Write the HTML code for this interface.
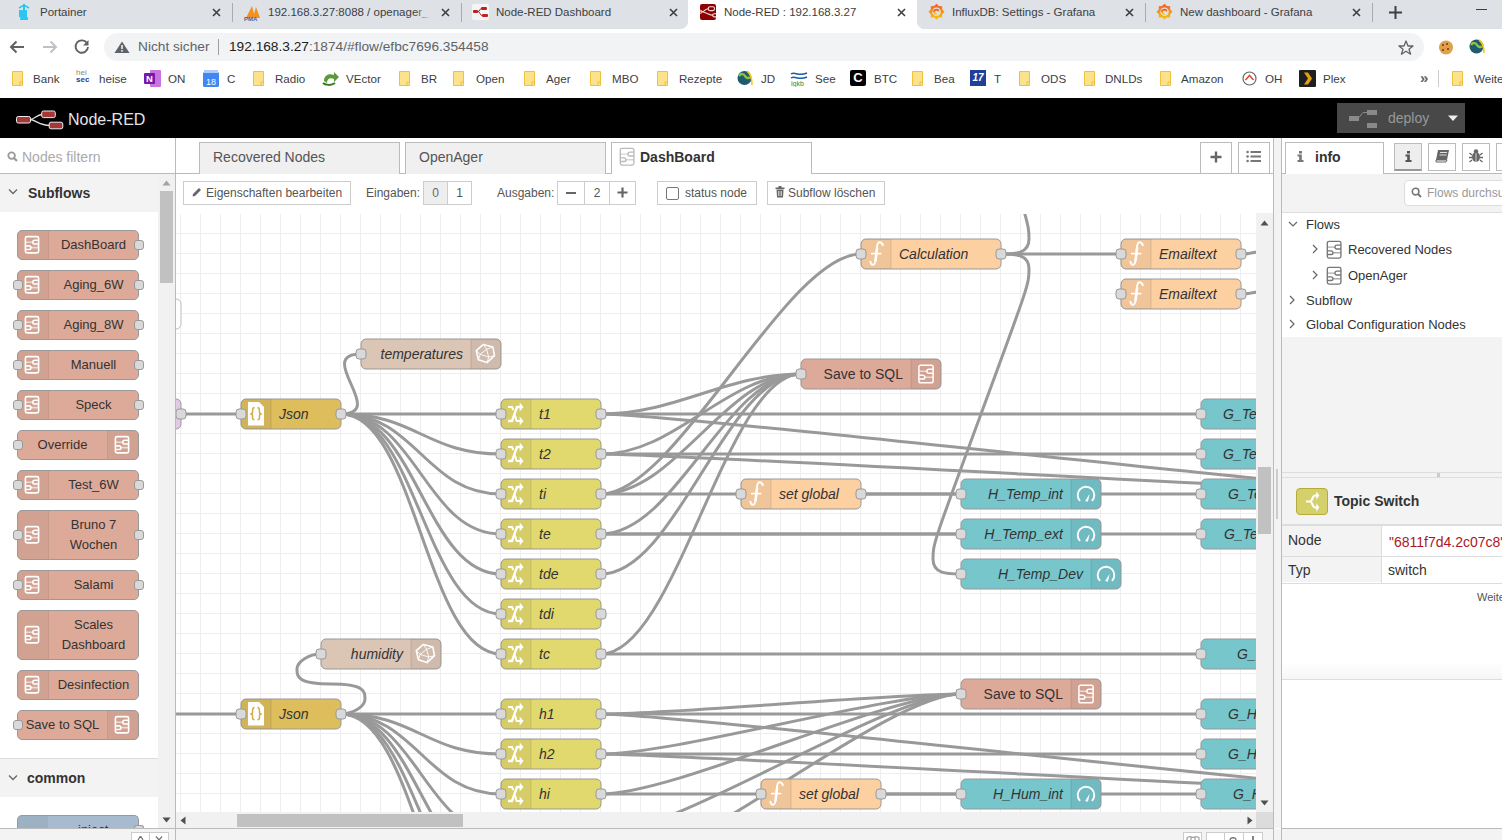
<!DOCTYPE html>
<html><head><meta charset="utf-8"><title>Node-RED</title><style>
*{box-sizing:border-box;margin:0;padding:0}
html,body{width:1502px;height:840px;overflow:hidden;background:#fff;font-family:"Liberation Sans",sans-serif;color:#333}
body{position:relative}
.a{position:absolute}
.tt{position:absolute;top:5px;font-size:11.5px;line-height:15px;color:#3c4043;white-space:nowrap}
.bm{position:absolute;top:71px;font-size:11.6px;line-height:15px;color:#3c4043;white-space:nowrap}
.pn{position:absolute;left:17px;width:122px;background:#DDAA99;border:1px solid #999;border-radius:5px;font-size:13px;color:#333}
.pn .ic{position:absolute;top:0;bottom:0;width:31px;background:rgba(0,0,0,0.05)}
.pn .lb{position:absolute;top:0;bottom:0;display:flex;align-items:center;justify-content:center;text-align:center;line-height:20px}
.pp{position:absolute;width:10px;height:10px;background:#d9d9d9;border:1px solid #999;border-radius:3px}
.wt{position:absolute;top:142px;height:32px;background:#f0f0f0;border:1px solid #bbb;border-bottom:none;font-size:14px;color:#555;line-height:29px;padding-left:13px;white-space:nowrap}
.wt.act{background:#fff;height:33px}
.bt{position:absolute;top:181px;height:24px;border:1px solid #ccc;background:#fff;font-size:12px;color:#555;line-height:22px;white-space:nowrap}
.tr{position:absolute;font-size:13px;line-height:17px;color:#333;white-space:nowrap}
</style></head><body>
<div class="a" style="left:0;top:0;width:1502px;height:29px;background:#DEE1E6"></div>
<div class="a" style="left:688px;top:0;width:229px;height:29px;background:#fff"></div>
<div class="a" style="left:680px;top:21px;width:8px;height:8px;background:radial-gradient(circle at 0 0,#DEE1E6 8px,#fff 8.5px)"></div>
<div class="a" style="left:917px;top:21px;width:8px;height:8px;background:radial-gradient(circle at 100% 0,#DEE1E6 8px,#fff 8.5px)"></div>
<div class="tt" style="left:40px;width:162px;overflow:hidden">Portainer</div>
<svg class="a" style="left:212px;top:8px" width="9" height="9"><path d="M1 1L8 8M8 1L1 8" stroke="#3c4043" stroke-width="1.6"/></svg>
<div class="tt" style="left:268px;width:163px;overflow:hidden">192.168.3.27:8088 / openager_</div>
<svg class="a" style="left:441px;top:8px" width="9" height="9"><path d="M1 1L8 8M8 1L1 8" stroke="#3c4043" stroke-width="1.6"/></svg>
<div class="tt" style="left:496px;width:163px;overflow:hidden">Node-RED Dashboard</div>
<svg class="a" style="left:669px;top:8px" width="9" height="9"><path d="M1 1L8 8M8 1L1 8" stroke="#3c4043" stroke-width="1.6"/></svg>
<div class="tt" style="left:724px;width:163px;overflow:hidden">Node-RED : 192.168.3.27</div>
<svg class="a" style="left:897px;top:8px" width="9" height="9"><path d="M1 1L8 8M8 1L1 8" stroke="#3c4043" stroke-width="1.6"/></svg>
<div class="tt" style="left:952px;width:163px;overflow:hidden">InfluxDB: Settings - Grafana</div>
<svg class="a" style="left:1125px;top:8px" width="9" height="9"><path d="M1 1L8 8M8 1L1 8" stroke="#3c4043" stroke-width="1.6"/></svg>
<div class="tt" style="left:1180px;width:162px;overflow:hidden">New dashboard - Grafana</div>
<svg class="a" style="left:1352px;top:8px" width="9" height="9"><path d="M1 1L8 8M8 1L1 8" stroke="#3c4043" stroke-width="1.6"/></svg>
<div class="a" style="left:232px;top:3px;width:1px;height:19px;background:#A8ABAF"></div>
<div class="a" style="left:461px;top:3px;width:1px;height:19px;background:#A8ABAF"></div>
<div class="a" style="left:1145px;top:3px;width:1px;height:19px;background:#A8ABAF"></div>
<div class="a" style="left:1372px;top:3px;width:1px;height:19px;background:#A8ABAF"></div>
<div class="a" style="left:415px;top:2px;width:16px;height:22px;background:linear-gradient(90deg,rgba(222,225,230,0),#DEE1E6)"></div>
<svg class="a" style="left:17px;top:4px" width="14" height="17"><path d="M7 0V14" stroke="#2ec5f0" stroke-width="2"/><path d="M2 4L7 1L12 4" fill="none" stroke="#2ec5f0" stroke-width="1.5"/><rect x="2" y="6" width="8" height="7" fill="#2ec5f0"/><rect x="3" y="13" width="8" height="3" rx="1" fill="#2ec5f0"/></svg>
<svg class="a" style="left:243px;top:4px" width="20" height="17"><path d="M3 14L9 2L11 10L13 3L17 14Z" fill="#F4901D"/><text x="1" y="17" font-size="6" font-weight="bold" fill="#5a5b8c" font-family="Liberation Sans">PMA</text></svg>
<svg class="a" style="left:472px;top:4px" width="17" height="16"><rect x="0" y="0" width="17" height="16" rx="2" fill="#f5f5f5"/><rect x="1" y="6" width="5" height="3" rx="1" fill="#b22"/><rect x="9" y="3" width="6" height="3" rx="1" fill="#b22"/><rect x="10" y="10" width="6" height="3" rx="1" fill="#b22"/><path d="M6 7.5C8 7.5 8 4.5 9 4.5M6 7.5C8 7.5 8 11.5 10 11.5" stroke="#b22" fill="none"/></svg>
<svg class="a" style="left:700px;top:4px" width="16" height="16"><rect width="16" height="16" rx="2" fill="#8F0000"/><rect x="8.2" y="2.8" width="6.4" height="3.8" rx="1.9" fill="none" stroke="#f3dcdc" stroke-width="1.1"/><path d="M0 7.8H2C4.5 7.8 5 4.7 8.2 4.7M2 7.8C5.5 7.8 9 11.3 13.3 11.3" fill="none" stroke="#f3dcdc" stroke-width="1.1"/><path d="M16 9.7H14.2A1.6 1.6 0 0 0 14.2 12.9H16" fill="none" stroke="#f3dcdc" stroke-width="1.1"/><path d="M0 6.3H0.6A1.5 1.5 0 0 1 0.6 9.3H0" fill="none" stroke="#f3dcdc" stroke-width="1"/></svg>
<svg class="a" style="left:928px;top:3px" width="18" height="18"><defs><linearGradient id="gg0" x1="0" y1="0" x2="0" y2="1"><stop offset="0" stop-color="#F05A28"/><stop offset="1" stop-color="#FBCA0A"/></linearGradient></defs><path d="M8.50 0.80 L10.87 3.07 L14.16 3.14 L14.23 6.43 L16.50 8.80 L14.23 11.17 L14.16 14.46 L10.87 14.53 L8.50 16.80 L6.13 14.53 L2.84 14.46 L2.77 11.17 L0.50 8.80 L2.77 6.43 L2.84 3.14 L6.13 3.07Z" fill="url(#gg0)"/><circle cx="8.5" cy="8.8" r="4.3" fill="#DEE1E6"/><path d="M8.8 11.2A2.3 2.3 0 1 1 10.8 8.4A3.2 3.2 0 0 0 5 8.8" fill="none" stroke="url(#gg0)" stroke-width="1.6"/></svg>
<svg class="a" style="left:1156px;top:3px" width="18" height="18"><defs><linearGradient id="gg1" x1="0" y1="0" x2="0" y2="1"><stop offset="0" stop-color="#F05A28"/><stop offset="1" stop-color="#FBCA0A"/></linearGradient></defs><path d="M8.50 0.80 L10.87 3.07 L14.16 3.14 L14.23 6.43 L16.50 8.80 L14.23 11.17 L14.16 14.46 L10.87 14.53 L8.50 16.80 L6.13 14.53 L2.84 14.46 L2.77 11.17 L0.50 8.80 L2.77 6.43 L2.84 3.14 L6.13 3.07Z" fill="url(#gg1)"/><circle cx="8.5" cy="8.8" r="4.3" fill="#DEE1E6"/><path d="M8.8 11.2A2.3 2.3 0 1 1 10.8 8.4A3.2 3.2 0 0 0 5 8.8" fill="none" stroke="url(#gg1)" stroke-width="1.6"/></svg>
<svg class="a" style="left:1389px;top:6px" width="13" height="13"><path d="M6.5 0V13M0 6.5H13" stroke="#3c4043" stroke-width="2"/></svg>
<div class="a" style="left:1476px;top:9px;width:11px;height:1px;background:#3c4043"></div>
<div class="a" style="left:104px;top:33px;width:1320px;height:28px;background:#F1F3F4;border-radius:14px"></div>
<svg class="a" style="left:8px;top:39px" width="18" height="16"><path d="M16 8H3M8.5 2.5L3 8L8.5 13.5" fill="none" stroke="#5f6368" stroke-width="2"/></svg>
<svg class="a" style="left:41px;top:39px" width="18" height="16"><path d="M2 8H15M9.5 2.5L15 8L9.5 13.5" fill="none" stroke="#bdc1c6" stroke-width="2"/></svg>
<svg class="a" style="left:73px;top:38px" width="18" height="18"><path d="M14.2 5.5A6.2 6.2 0 1 0 15 9" fill="none" stroke="#5f6368" stroke-width="1.9"/><path d="M15.5 2V7.5H10Z" fill="#5f6368"/></svg>
<svg class="a" style="left:114px;top:41px" width="16" height="12"><path d="M8 0.5L15.5 12H0.5Z" fill="#5f6368"/><rect x="7.2" y="4" width="1.6" height="4" fill="#F1F3F4"/><rect x="7.2" y="9" width="1.6" height="1.6" fill="#F1F3F4"/></svg>
<div class="a" style="left:138px;top:39px;font-size:13.7px;line-height:16px;color:#5f6368">Nicht sicher</div>
<div class="a" style="left:218px;top:39px;width:1px;height:16px;background:#9aa0a6"></div>
<div class="a" style="left:229px;top:39px;font-size:13.7px;line-height:16px;color:#5f6368;white-space:nowrap"><span style="color:#202124">192.168.3.27</span>:1874/#flow/efbc7696.354458</div>
<svg class="a" style="left:1398px;top:40px" width="16" height="15"><path d="M8 1L10 6H15L11 9.2L12.6 14.2L8 11.2L3.4 14.2L5 9.2L1 6H6Z" fill="none" stroke="#5f6368" stroke-width="1.3" stroke-linejoin="round"/></svg>
<svg class="a" style="left:1438px;top:40px" width="16" height="15"><circle cx="8" cy="7.5" r="7" fill="#E0A04A"/><circle cx="5" cy="5" r="1" fill="#6b3b12"/><circle cx="9" cy="4" r="1" fill="#6b3b12"/><circle cx="10" cy="9" r="1" fill="#6b3b12"/><circle cx="5" cy="10" r="1" fill="#6b3b12"/></svg>
<svg class="a" style="left:1469px;top:39px" width="18" height="16"><circle cx="7.5" cy="7.5" r="7" fill="#1f5a6e"/><path d="M2 6C4 3 7 4 8 6S12 9 13 7" stroke="#8bc34a" stroke-width="2.5" fill="none"/><path d="M10 1C14 4 15 10 15 14" stroke="#F9C80E" stroke-width="1.6" fill="none"/></svg>
<div class="bm" style="left:33px">Bank</div>
<div class="bm" style="left:99px">heise</div>
<div class="bm" style="left:168px">ON</div>
<div class="bm" style="left:227px">C</div>
<div class="bm" style="left:275px">Radio</div>
<div class="bm" style="left:346px">VEctor</div>
<div class="bm" style="left:421px">BR</div>
<div class="bm" style="left:476px">Open</div>
<div class="bm" style="left:546px">Ager</div>
<div class="bm" style="left:612px">MBO</div>
<div class="bm" style="left:679px">Rezepte</div>
<div class="bm" style="left:761px">JD</div>
<div class="bm" style="left:815px">See</div>
<div class="bm" style="left:874px">BTC</div>
<div class="bm" style="left:934px">Bea</div>
<div class="bm" style="left:994px">T</div>
<div class="bm" style="left:1041px">ODS</div>
<div class="bm" style="left:1105px">DNLDs</div>
<div class="bm" style="left:1181px">Amazon</div>
<div class="bm" style="left:1265px">OH</div>
<div class="bm" style="left:1323px">Plex</div>
<div class="bm" style="left:1474px">Weitere</div>
<svg class="a" style="left:12px;top:71px" width="12" height="16"><path d="M0.5 0.5H10.5V14.5H0.5Z" fill="#FCE28A" stroke="#EFC13F" stroke-width="1"/><path d="M8 14.5V11H10.5" fill="none" stroke="#EFC13F" stroke-width="1"/></svg>
<svg class="a" style="left:253px;top:71px" width="12" height="16"><path d="M0.5 0.5H10.5V14.5H0.5Z" fill="#FCE28A" stroke="#EFC13F" stroke-width="1"/><path d="M8 14.5V11H10.5" fill="none" stroke="#EFC13F" stroke-width="1"/></svg>
<svg class="a" style="left:399px;top:71px" width="12" height="16"><path d="M0.5 0.5H10.5V14.5H0.5Z" fill="#FCE28A" stroke="#EFC13F" stroke-width="1"/><path d="M8 14.5V11H10.5" fill="none" stroke="#EFC13F" stroke-width="1"/></svg>
<svg class="a" style="left:453px;top:71px" width="12" height="16"><path d="M0.5 0.5H10.5V14.5H0.5Z" fill="#FCE28A" stroke="#EFC13F" stroke-width="1"/><path d="M8 14.5V11H10.5" fill="none" stroke="#EFC13F" stroke-width="1"/></svg>
<svg class="a" style="left:524px;top:71px" width="12" height="16"><path d="M0.5 0.5H10.5V14.5H0.5Z" fill="#FCE28A" stroke="#EFC13F" stroke-width="1"/><path d="M8 14.5V11H10.5" fill="none" stroke="#EFC13F" stroke-width="1"/></svg>
<svg class="a" style="left:590px;top:71px" width="12" height="16"><path d="M0.5 0.5H10.5V14.5H0.5Z" fill="#FCE28A" stroke="#EFC13F" stroke-width="1"/><path d="M8 14.5V11H10.5" fill="none" stroke="#EFC13F" stroke-width="1"/></svg>
<svg class="a" style="left:657px;top:71px" width="12" height="16"><path d="M0.5 0.5H10.5V14.5H0.5Z" fill="#FCE28A" stroke="#EFC13F" stroke-width="1"/><path d="M8 14.5V11H10.5" fill="none" stroke="#EFC13F" stroke-width="1"/></svg>
<svg class="a" style="left:912px;top:71px" width="12" height="16"><path d="M0.5 0.5H10.5V14.5H0.5Z" fill="#FCE28A" stroke="#EFC13F" stroke-width="1"/><path d="M8 14.5V11H10.5" fill="none" stroke="#EFC13F" stroke-width="1"/></svg>
<svg class="a" style="left:1019px;top:71px" width="12" height="16"><path d="M0.5 0.5H10.5V14.5H0.5Z" fill="#FCE28A" stroke="#EFC13F" stroke-width="1"/><path d="M8 14.5V11H10.5" fill="none" stroke="#EFC13F" stroke-width="1"/></svg>
<svg class="a" style="left:1084px;top:71px" width="12" height="16"><path d="M0.5 0.5H10.5V14.5H0.5Z" fill="#FCE28A" stroke="#EFC13F" stroke-width="1"/><path d="M8 14.5V11H10.5" fill="none" stroke="#EFC13F" stroke-width="1"/></svg>
<svg class="a" style="left:1160px;top:71px" width="12" height="16"><path d="M0.5 0.5H10.5V14.5H0.5Z" fill="#FCE28A" stroke="#EFC13F" stroke-width="1"/><path d="M8 14.5V11H10.5" fill="none" stroke="#EFC13F" stroke-width="1"/></svg>
<svg class="a" style="left:1452px;top:71px" width="12" height="16"><path d="M0.5 0.5H10.5V14.5H0.5Z" fill="#FCE28A" stroke="#EFC13F" stroke-width="1"/><path d="M8 14.5V11H10.5" fill="none" stroke="#EFC13F" stroke-width="1"/></svg>
<div class="a" style="left:76px;top:69px;font-size:8px;line-height:7px;color:#888;font-family:'Liberation Sans'">hei<br><span style="color:#1a3da0;font-weight:bold">sec</span></div>
<svg class="a" style="left:144px;top:70px" width="17" height="17"><rect x="6" y="0" width="11" height="17" rx="1" fill="#C774DF"/><rect x="0" y="3" width="11" height="11" rx="1" fill="#7719AA"/><text x="5.5" y="12" text-anchor="middle" font-size="9.5" font-weight="bold" fill="#fff" font-family="Liberation Sans">N</text></svg>
<svg class="a" style="left:203px;top:70px" width="16" height="17"><rect x="0" y="2" width="16" height="15" rx="1.5" fill="#4285F4"/><rect x="1" y="0" width="14" height="3" fill="#aecbfa"/><text x="8" y="14.5" text-anchor="middle" font-size="9" fill="#fff" font-family="Liberation Sans">18</text></svg>
<svg class="a" style="left:322px;top:71px" width="17" height="15"><path d="M2 10C2 4 7 2 12 4L12 1L17 6L12 11L12 8C8 6 5 8 5 12Z" fill="#5B9A3C"/><path d="M1 12C3 14 9 15 13 12" stroke="#3b7a1c" stroke-width="2" fill="none"/></svg>
<svg class="a" style="left:737px;top:70px" width="18" height="17"><circle cx="7.5" cy="8" r="7" fill="#1f5a6e"/><path d="M2 6C4 3 7 4 8 6S12 9 13 7" stroke="#8bc34a" stroke-width="2.5" fill="none"/><path d="M10 1C14 4 15 10 15 15" stroke="#F9C80E" stroke-width="1.6" fill="none"/></svg>
<svg class="a" style="left:790px;top:70px" width="18" height="17"><path d="M1 4C5 1 8 7 17 3M1 8C5 5 8 11 17 7" stroke="#1a5ca8" stroke-width="1.5" fill="none"/><text x="1" y="16" font-size="7" fill="#2a8a3a" font-family="Liberation Sans">igkb</text></svg>
<div class="a" style="left:850px;top:70px;width:16px;height:16px;background:#000;border-radius:2px;color:#fff;font-size:13px;font-weight:bold;line-height:16px;text-align:center">C</div>
<div class="a" style="left:970px;top:70px;width:16px;height:16px;background:#1f3f9a;color:#fff;font-size:10px;font-weight:bold;line-height:16px;text-align:center;font-style:italic">17</div>
<svg class="a" style="left:1242px;top:71px" width="15" height="15"><circle cx="7.5" cy="7.5" r="6.5" fill="none" stroke="#666" stroke-width="1.2"/><path d="M3.5 9L7.5 4.5L11.5 9" fill="none" stroke="#E64A2E" stroke-width="1.6"/></svg>
<svg class="a" style="left:1299px;top:70px" width="17" height="17"><rect width="17" height="17" rx="1" fill="#1F1F1F"/><path d="M5 2.5H9L13 8.5L9 14.5H5L9 8.5Z" fill="#E5A00D"/></svg>
<div class="a" style="left:1420px;top:70px;font-size:15px;line-height:16px;font-weight:bold;color:#5f6368">&#187;</div>
<div class="a" style="left:1438px;top:70px;width:1px;height:17px;background:#ccc"></div>
<div class="a" style="left:0;top:98px;width:1502px;height:40px;background:#000"></div>
<svg class="a" style="left:14px;top:109px" width="52" height="22">
<path d="M16 10.5C20 10.5 23 5.5 28 5.5M16 10.5C21 10.5 25 16.5 36 16.5" stroke="#ddd" stroke-width="1.4" fill="none"/>
<rect x="2.5" y="7.5" width="14" height="6.5" rx="1.8" fill="#A53737" stroke="#eee" stroke-width="1"/>
<rect x="27.7" y="2" width="13.6" height="6.6" rx="1.8" fill="#A53737" stroke="#eee" stroke-width="1"/>
<rect x="35.2" y="13.2" width="13.6" height="6.6" rx="1.8" fill="#A53737" stroke="#eee" stroke-width="1"/>
</svg>
<div class="a" style="left:68px;top:110px;font-size:16px;line-height:19px;color:#e4e4e4">Node-RED</div>
<div class="a" style="left:1337px;top:103px;width:128px;height:30px;background:#484848"></div>
<svg class="a" style="left:1349px;top:109px" width="30" height="20"><rect x="0" y="7" width="10" height="5" fill="#8a8a8a"/><rect x="18" y="1" width="10" height="5" fill="#8a8a8a"/><rect x="18" y="14" width="10" height="5" fill="#8a8a8a"/><path d="M10 8.5L14 3.5H18" stroke="#8a8a8a" stroke-width="1" fill="none"/></svg>
<div class="a" style="left:1388px;top:110px;font-size:14px;line-height:17px;color:#999">deploy</div>
<svg class="a" style="left:1448px;top:115px" width="11" height="7"><path d="M0 0.5H10L5 6Z" fill="#eee"/></svg>
<div class="a" style="left:0;top:138px;width:175px;height:36px;background:#fff;border-bottom:1px solid #bbb"></div>
<svg class="a" style="left:7px;top:151px" width="11" height="11"><circle cx="4.6" cy="4.6" r="3.3" fill="none" stroke="#999" stroke-width="1.8"/><path d="M7 7L10 10" stroke="#999" stroke-width="2.2"/></svg>
<div class="a" style="left:22px;top:149px;font-size:14px;line-height:17px;color:#aaa">Nodes filtern</div>
<div class="a" style="left:0;top:174px;width:158px;height:38px;background:#f3f3f3"></div>
<div class="a" style="left:0;top:212px;width:158px;height:546px;background:#fff"></div>
<svg class="a" style="left:8px;top:188px" width="10" height="8"><path d="M1 1.5L5 5.5L9 1.5" fill="none" stroke="#666" stroke-width="1.3"/></svg>
<div class="a" style="left:28px;top:185px;font-size:14px;line-height:17px;color:#333;font-weight:bold">Subflows</div>
<div class="a" style="left:158px;top:174px;width:17px;height:654px;background:#f1f1f1"></div>
<div class="a" style="left:160px;top:191px;width:13px;height:92px;background:#c1c1c1"></div>
<svg class="a" style="left:162px;top:180px" width="9" height="6"><path d="M0.5 5.5H8.5L4.5 0.5Z" fill="#a3a3a3"/></svg>
<svg class="a" style="left:162px;top:817px" width="9" height="6"><path d="M0.5 0.5H8.5L4.5 5.5Z" fill="#505050"/></svg>
<div class="pn" style="top:230px;height:30px"><div class="ic" style="left:0;border-radius:4px 0 0 4px;border-right:1px solid rgba(0,0,0,0.05)"><svg width="18" height="20" style="position:absolute;left:6px;top:4px"><g transform="translate(1.4,1.6) scale(0.93)" fill="none" stroke="#fff" stroke-width="1.72043"><rect x="0" y="0" width="14.2" height="17.5" rx="1.8"/><path d="M14.2 4H10A2 2 0 0 0 10 8H14.2M0 10H4A1.9 1.9 0 0 1 4 13.8H0"/><path d="M0 6H8M6 11.9H14.2" stroke-opacity="0.6"/></g></svg></div><div class="lb" style="left:31px;right:0">DashBoard</div></div>
<div class="pp" style="left:134px;top:240px"></div>
<div class="pn" style="top:270px;height:30px"><div class="ic" style="left:0;border-radius:4px 0 0 4px;border-right:1px solid rgba(0,0,0,0.05)"><svg width="18" height="20" style="position:absolute;left:6px;top:4px"><g transform="translate(1.4,1.6) scale(0.93)" fill="none" stroke="#fff" stroke-width="1.72043"><rect x="0" y="0" width="14.2" height="17.5" rx="1.8"/><path d="M14.2 4H10A2 2 0 0 0 10 8H14.2M0 10H4A1.9 1.9 0 0 1 4 13.8H0"/><path d="M0 6H8M6 11.9H14.2" stroke-opacity="0.6"/></g></svg></div><div class="lb" style="left:31px;right:0">Aging_6W</div></div>
<div class="pp" style="left:13px;top:280px"></div>
<div class="pp" style="left:134px;top:280px"></div>
<div class="pn" style="top:310px;height:30px"><div class="ic" style="left:0;border-radius:4px 0 0 4px;border-right:1px solid rgba(0,0,0,0.05)"><svg width="18" height="20" style="position:absolute;left:6px;top:4px"><g transform="translate(1.4,1.6) scale(0.93)" fill="none" stroke="#fff" stroke-width="1.72043"><rect x="0" y="0" width="14.2" height="17.5" rx="1.8"/><path d="M14.2 4H10A2 2 0 0 0 10 8H14.2M0 10H4A1.9 1.9 0 0 1 4 13.8H0"/><path d="M0 6H8M6 11.9H14.2" stroke-opacity="0.6"/></g></svg></div><div class="lb" style="left:31px;right:0">Aging_8W</div></div>
<div class="pp" style="left:13px;top:320px"></div>
<div class="pp" style="left:134px;top:320px"></div>
<div class="pn" style="top:350px;height:30px"><div class="ic" style="left:0;border-radius:4px 0 0 4px;border-right:1px solid rgba(0,0,0,0.05)"><svg width="18" height="20" style="position:absolute;left:6px;top:4px"><g transform="translate(1.4,1.6) scale(0.93)" fill="none" stroke="#fff" stroke-width="1.72043"><rect x="0" y="0" width="14.2" height="17.5" rx="1.8"/><path d="M14.2 4H10A2 2 0 0 0 10 8H14.2M0 10H4A1.9 1.9 0 0 1 4 13.8H0"/><path d="M0 6H8M6 11.9H14.2" stroke-opacity="0.6"/></g></svg></div><div class="lb" style="left:31px;right:0">Manuell</div></div>
<div class="pp" style="left:13px;top:360px"></div>
<div class="pp" style="left:134px;top:360px"></div>
<div class="pn" style="top:390px;height:30px"><div class="ic" style="left:0;border-radius:4px 0 0 4px;border-right:1px solid rgba(0,0,0,0.05)"><svg width="18" height="20" style="position:absolute;left:6px;top:4px"><g transform="translate(1.4,1.6) scale(0.93)" fill="none" stroke="#fff" stroke-width="1.72043"><rect x="0" y="0" width="14.2" height="17.5" rx="1.8"/><path d="M14.2 4H10A2 2 0 0 0 10 8H14.2M0 10H4A1.9 1.9 0 0 1 4 13.8H0"/><path d="M0 6H8M6 11.9H14.2" stroke-opacity="0.6"/></g></svg></div><div class="lb" style="left:31px;right:0">Speck</div></div>
<div class="pp" style="left:13px;top:400px"></div>
<div class="pp" style="left:134px;top:400px"></div>
<div class="pn" style="top:430px;height:30px"><div class="ic" style="right:0;border-radius:0 4px 4px 0;border-left:1px solid rgba(0,0,0,0.05)"><svg width="18" height="20" style="position:absolute;left:6px;top:4px"><g transform="translate(1.4,1.6) scale(0.93)" fill="none" stroke="#fff" stroke-width="1.72043"><rect x="0" y="0" width="14.2" height="17.5" rx="1.8"/><path d="M14.2 4H10A2 2 0 0 0 10 8H14.2M0 10H4A1.9 1.9 0 0 1 4 13.8H0"/><path d="M0 6H8M6 11.9H14.2" stroke-opacity="0.6"/></g></svg></div><div class="lb" style="left:0;right:31px">Override</div></div>
<div class="pp" style="left:13px;top:440px"></div>
<div class="pn" style="top:470px;height:30px"><div class="ic" style="left:0;border-radius:4px 0 0 4px;border-right:1px solid rgba(0,0,0,0.05)"><svg width="18" height="20" style="position:absolute;left:6px;top:4px"><g transform="translate(1.4,1.6) scale(0.93)" fill="none" stroke="#fff" stroke-width="1.72043"><rect x="0" y="0" width="14.2" height="17.5" rx="1.8"/><path d="M14.2 4H10A2 2 0 0 0 10 8H14.2M0 10H4A1.9 1.9 0 0 1 4 13.8H0"/><path d="M0 6H8M6 11.9H14.2" stroke-opacity="0.6"/></g></svg></div><div class="lb" style="left:31px;right:0">Test_6W</div></div>
<div class="pp" style="left:13px;top:480px"></div>
<div class="pp" style="left:134px;top:480px"></div>
<div class="pn" style="top:510px;height:50px"><div class="ic" style="left:0;border-radius:4px 0 0 4px;border-right:1px solid rgba(0,0,0,0.05)"><svg width="18" height="20" style="position:absolute;left:6px;top:14px"><g transform="translate(1.4,1.6) scale(0.93)" fill="none" stroke="#fff" stroke-width="1.72043"><rect x="0" y="0" width="14.2" height="17.5" rx="1.8"/><path d="M14.2 4H10A2 2 0 0 0 10 8H14.2M0 10H4A1.9 1.9 0 0 1 4 13.8H0"/><path d="M0 6H8M6 11.9H14.2" stroke-opacity="0.6"/></g></svg></div><div class="lb" style="left:31px;right:0">Bruno 7<br>Wochen</div></div>
<div class="pp" style="left:13px;top:530px"></div>
<div class="pp" style="left:134px;top:530px"></div>
<div class="pn" style="top:570px;height:30px"><div class="ic" style="left:0;border-radius:4px 0 0 4px;border-right:1px solid rgba(0,0,0,0.05)"><svg width="18" height="20" style="position:absolute;left:6px;top:4px"><g transform="translate(1.4,1.6) scale(0.93)" fill="none" stroke="#fff" stroke-width="1.72043"><rect x="0" y="0" width="14.2" height="17.5" rx="1.8"/><path d="M14.2 4H10A2 2 0 0 0 10 8H14.2M0 10H4A1.9 1.9 0 0 1 4 13.8H0"/><path d="M0 6H8M6 11.9H14.2" stroke-opacity="0.6"/></g></svg></div><div class="lb" style="left:31px;right:0">Salami</div></div>
<div class="pp" style="left:13px;top:580px"></div>
<div class="pp" style="left:134px;top:580px"></div>
<div class="pn" style="top:610px;height:50px"><div class="ic" style="left:0;border-radius:4px 0 0 4px;border-right:1px solid rgba(0,0,0,0.05)"><svg width="18" height="20" style="position:absolute;left:6px;top:14px"><g transform="translate(1.4,1.6) scale(0.93)" fill="none" stroke="#fff" stroke-width="1.72043"><rect x="0" y="0" width="14.2" height="17.5" rx="1.8"/><path d="M14.2 4H10A2 2 0 0 0 10 8H14.2M0 10H4A1.9 1.9 0 0 1 4 13.8H0"/><path d="M0 6H8M6 11.9H14.2" stroke-opacity="0.6"/></g></svg></div><div class="lb" style="left:31px;right:0">Scales<br>Dashboard</div></div>
<div class="pn" style="top:670px;height:30px"><div class="ic" style="left:0;border-radius:4px 0 0 4px;border-right:1px solid rgba(0,0,0,0.05)"><svg width="18" height="20" style="position:absolute;left:6px;top:4px"><g transform="translate(1.4,1.6) scale(0.93)" fill="none" stroke="#fff" stroke-width="1.72043"><rect x="0" y="0" width="14.2" height="17.5" rx="1.8"/><path d="M14.2 4H10A2 2 0 0 0 10 8H14.2M0 10H4A1.9 1.9 0 0 1 4 13.8H0"/><path d="M0 6H8M6 11.9H14.2" stroke-opacity="0.6"/></g></svg></div><div class="lb" style="left:31px;right:0">Desinfection</div></div>
<div class="pn" style="top:710px;height:30px"><div class="ic" style="right:0;border-radius:0 4px 4px 0;border-left:1px solid rgba(0,0,0,0.05)"><svg width="18" height="20" style="position:absolute;left:6px;top:4px"><g transform="translate(1.4,1.6) scale(0.93)" fill="none" stroke="#fff" stroke-width="1.72043"><rect x="0" y="0" width="14.2" height="17.5" rx="1.8"/><path d="M14.2 4H10A2 2 0 0 0 10 8H14.2M0 10H4A1.9 1.9 0 0 1 4 13.8H0"/><path d="M0 6H8M6 11.9H14.2" stroke-opacity="0.6"/></g></svg></div><div class="lb" style="left:0;right:31px">Save to SQL</div></div>
<div class="pp" style="left:13px;top:720px"></div>
<div class="a" style="left:0;top:758px;width:158px;height:1px;background:#ddd"></div>
<div class="a" style="left:0;top:759px;width:158px;height:38px;background:#f3f3f3"></div>
<svg class="a" style="left:8px;top:774px" width="10" height="8"><path d="M1 1.5L5 5.5L9 1.5" fill="none" stroke="#666" stroke-width="1.3"/></svg>
<div class="a" style="left:27px;top:770px;font-size:14px;line-height:17px;color:#333;font-weight:bold">common</div>
<div class="a" style="left:17px;top:815px;width:122px;height:20px;background:#a6bbcf;border:1px solid #999;border-bottom:none;border-radius:5px 5px 0 0;overflow:hidden"><div style="position:absolute;left:0;top:0;width:30px;height:20px;background:rgba(0,0,0,0.05)"></div><div style="position:absolute;left:60px;top:6px;font-size:13px;color:#333">inject</div></div>
<div class="a" style="left:134px;top:825px;width:10px;height:4px;background:#d9d9d9;border:1px solid #999;border-bottom:none;border-radius:3px 3px 0 0"></div>
<div class="a" style="left:175px;top:138px;width:1px;height:690px;background:#bbb"></div>
<div class="a" style="left:176px;top:173px;width:1097px;height:1px;background:#bbb"></div>
<div class="wt" style="left:199px;width:201px">Recovered Nodes</div>
<div class="wt" style="left:405px;width:201px">OpenAger</div>
<div class="wt act" style="left:611px;width:201px;padding-left:28px;font-weight:bold;color:#333">DashBoard</div>
<svg class="a" style="left:619px;top:147px" width="18" height="20"><g transform="translate(1.3,1.3) scale(0.96)" fill="none" stroke="#bbb" stroke-width="1.40625"><rect x="0" y="0" width="14.2" height="17.5" rx="1.8"/><path d="M14.2 4H10A2 2 0 0 0 10 8H14.2M0 10H4A1.9 1.9 0 0 1 4 13.8H0"/><path d="M0 6H8M6 11.9H14.2" stroke-opacity="0.6"/></g></svg>
<div class="wt" style="left:1200px;width:32px;height:31px;background:#fff;padding:0"></div>
<div class="wt" style="left:1238px;width:32px;height:31px;background:#fff;padding:0"></div>
<svg class="a" style="left:1209px;top:150px" width="14" height="14"><path d="M7 1.5V12.5M1.5 7H12.5" stroke="#666" stroke-width="2.4"/></svg>
<svg class="a" style="left:1246px;top:150px" width="16" height="13"><circle cx="1.6" cy="2" r="1.3" fill="#777"/><circle cx="1.6" cy="6.5" r="1.3" fill="#777"/><circle cx="1.6" cy="11" r="1.3" fill="#777"/><path d="M4.5 2H15M4.5 6.5H15M4.5 11H15" stroke="#777" stroke-width="1.8"/></svg>
<div class="a" style="left:176px;top:174px;width:1097px;height:40px;background:#fff;border-bottom:1px solid #bbb"></div>
<div class="bt" style="left:183px;width:168px;padding-left:22px">Eigenschaften bearbeiten</div>
<svg class="a" style="left:191px;top:187px" width="11" height="11"><path d="M1.5 9.5L2 7L8 1L10 3L4 9Z" fill="#666"/></svg>
<div class="a" style="left:366px;top:186px;font-size:12px;line-height:14px;color:#555">Eingaben:</div>
<div class="bt" style="left:423px;width:25px;background:#eee;text-align:center;color:#666">0</div>
<div class="bt" style="left:447px;width:25px;text-align:center">1</div>
<div class="a" style="left:497px;top:186px;font-size:12px;line-height:14px;color:#555">Ausgaben:</div>
<div class="bt" style="left:557px;width:28px"></div>
<div class="a" style="left:566px;top:192px;width:10px;height:2px;background:#666"></div>
<div class="bt" style="left:584px;width:26px;text-align:center">2</div>
<div class="bt" style="left:609px;width:27px"></div>
<svg class="a" style="left:617px;top:187px" width="11" height="11"><path d="M5.5 0.5V10.5M0.5 5.5H10.5" stroke="#666" stroke-width="2.2"/></svg>
<div class="bt" style="left:657px;width:100px;padding-left:27px">status node</div>
<div class="a" style="left:666px;top:187px;width:13px;height:13px;border:1px solid #777;border-radius:2px;background:#fff"></div>
<div class="bt" style="left:767px;width:118px;padding-left:20px">Subflow l&#246;schen</div>
<svg class="a" style="left:775px;top:186px" width="10" height="12"><rect x="0.5" y="1.5" width="9" height="1.5" fill="#666"/><rect x="3.5" y="0" width="3" height="2" fill="#666"/><path d="M1.5 3.5H8.5L8 11.5H2Z" fill="#666"/><path d="M3.5 5V10M5 5V10M6.5 5V10" stroke="#fff" stroke-width="0.6"/></svg>
<div class="a" style="left:176px;top:213px;width:1080px;height:599px;background:#fff"></div>
<svg width="1080" height="598" viewBox="176 214 1080 598" style="position:absolute;left:176px;top:214px" font-family='"Liberation Sans", sans-serif' font-size="14" fill="#333">
<path d="M180.5 214V812M200.5 214V812M220.5 214V812M240.5 214V812M260.5 214V812M280.5 214V812M300.5 214V812M320.5 214V812M340.5 214V812M360.5 214V812M380.5 214V812M400.5 214V812M420.5 214V812M440.5 214V812M460.5 214V812M480.5 214V812M500.5 214V812M520.5 214V812M540.5 214V812M560.5 214V812M580.5 214V812M600.5 214V812M620.5 214V812M640.5 214V812M660.5 214V812M680.5 214V812M700.5 214V812M720.5 214V812M740.5 214V812M760.5 214V812M780.5 214V812M800.5 214V812M820.5 214V812M840.5 214V812M860.5 214V812M880.5 214V812M900.5 214V812M920.5 214V812M940.5 214V812M960.5 214V812M980.5 214V812M1000.5 214V812M1020.5 214V812M1040.5 214V812M1060.5 214V812M1080.5 214V812M1100.5 214V812M1120.5 214V812M1140.5 214V812M1160.5 214V812M1180.5 214V812M1200.5 214V812M1220.5 214V812M1240.5 214V812M176 233.5H1256M176 253.5H1256M176 273.5H1256M176 293.5H1256M176 313.5H1256M176 333.5H1256M176 353.5H1256M176 373.5H1256M176 393.5H1256M176 413.5H1256M176 433.5H1256M176 453.5H1256M176 473.5H1256M176 493.5H1256M176 513.5H1256M176 533.5H1256M176 553.5H1256M176 573.5H1256M176 593.5H1256M176 613.5H1256M176 633.5H1256M176 653.5H1256M176 673.5H1256M176 693.5H1256M176 713.5H1256M176 733.5H1256M176 753.5H1256M176 773.5H1256M176 793.5H1256" stroke="#eee" stroke-width="1" fill="none"/>
<path d="M 181 414 C 226 414 196 414 241 414" stroke="#999" stroke-width="3" fill="none"/>
<path d="M 341 414 C 388.434 414 313.566 354 361 354" stroke="#999" stroke-width="3" fill="none"/>
<path d="M 341 414 C 416 414 426 414 501 414" stroke="#999" stroke-width="3" fill="none"/>
<path d="M 341 414 C 416 414 426 454 501 454" stroke="#999" stroke-width="3" fill="none"/>
<path d="M 341 414 C 416 414 426 494 501 494" stroke="#999" stroke-width="3" fill="none"/>
<path d="M 341 414 C 416 414 426 534 501 534" stroke="#999" stroke-width="3" fill="none"/>
<path d="M 341 414 C 416 414 426 574 501 574" stroke="#999" stroke-width="3" fill="none"/>
<path d="M 341 414 C 416 414 426 614 501 614" stroke="#999" stroke-width="3" fill="none"/>
<path d="M 341 414 C 416 414 426 654 501 654" stroke="#999" stroke-width="3" fill="none"/>
<path d="M 601 414 C 676 414 726 374 801 374" stroke="#999" stroke-width="3" fill="none"/>
<path d="M 601 454 C 676 454 726 374 801 374" stroke="#999" stroke-width="3" fill="none"/>
<path d="M 601 494 C 676 494 726 374 801 374" stroke="#999" stroke-width="3" fill="none"/>
<path d="M 601 534 C 676 534 726 374 801 374" stroke="#999" stroke-width="3" fill="none"/>
<path d="M 601 574 C 676 574 726 374 801 374" stroke="#999" stroke-width="3" fill="none"/>
<path d="M 601 654 C 676 654 726 374 801 374" stroke="#999" stroke-width="3" fill="none"/>
<path d="M 601 414 C 676 414 1126 414 1201 414" stroke="#999" stroke-width="3" fill="none"/>
<path d="M 601 454 C 676 454 1126 454 1201 454" stroke="#999" stroke-width="3" fill="none"/>
<path d="M 601 414 C 676 414 1366 494 1441 494" stroke="#999" stroke-width="3" fill="none"/>
<path d="M 601 454 C 676 454 1366 494 1441 494" stroke="#999" stroke-width="3" fill="none"/>
<path d="M 601 494 C 676 494 786 254 861 254" stroke="#999" stroke-width="3" fill="none"/>
<path d="M 601 494 C 676 494 666 494 741 494" stroke="#999" stroke-width="3" fill="none"/>
<path d="M 601 534 C 676 534 886 534 961 534" stroke="#999" stroke-width="3" fill="none"/>
<path d="M 601 534 C 676 534 1126 534 1201 534" stroke="#999" stroke-width="3" fill="none"/>
<path d="M 601 654 C 676 654 1126 654 1201 654" stroke="#999" stroke-width="3" fill="none"/>
<path d="M 861 494 C 936 494 886 494 961 494" stroke="#999" stroke-width="3" fill="none"/>
<path d="M 861 494 C 936 494 1126 494 1201 494" stroke="#999" stroke-width="3" fill="none"/>
<path d="M 1001 254 C 1076 254 1046 254 1121 254" stroke="#999" stroke-width="3" fill="none"/>
<path d="M 1001 254 C 1015 254 1029 254 1029 269 S 1029 284 981 414 S 933 544 933 559 S 947 574 961 574" stroke="#999" stroke-width="3" fill="none"/>
<path d="M 1001 254 C 1015 254 1029 254 1029 239 S 1029 224 981 77 S 933 -70 933 -85 S 947 -100 961 -100" stroke="#999" stroke-width="3" fill="none"/>
<path d="M 1241 254 C 1316 254 1366 120 1441 120" stroke="#999" stroke-width="3" fill="none"/>
<path d="M 1241 294 C 1316 294 1366 160 1441 160" stroke="#999" stroke-width="3" fill="none"/>
<path d="M 100 714 C 175 714 166 714 241 714" stroke="#999" stroke-width="3" fill="none"/>
<path d="M 341 714 C 353 714 365 706.5 365 699 S 365 684 331 684 S 297 676.5 297 669 S 309 654 321 654" stroke="#999" stroke-width="3" fill="none"/>
<path d="M 341 714 C 416 714 426 714 501 714" stroke="#999" stroke-width="3" fill="none"/>
<path d="M 341 714 C 416 714 426 754 501 754" stroke="#999" stroke-width="3" fill="none"/>
<path d="M 341 714 C 416 714 426 794 501 794" stroke="#999" stroke-width="3" fill="none"/>
<path d="M 341 714 C 416 714 426 834 501 834" stroke="#999" stroke-width="3" fill="none"/>
<path d="M 341 714 C 416 714 426 874 501 874" stroke="#999" stroke-width="3" fill="none"/>
<path d="M 341 714 C 416 714 426 914 501 914" stroke="#999" stroke-width="3" fill="none"/>
<path d="M 341 714 C 416 714 426 954 501 954" stroke="#999" stroke-width="3" fill="none"/>
<path d="M 601 714 C 676 714 886 694 961 694" stroke="#999" stroke-width="3" fill="none"/>
<path d="M 601 754 C 676 754 886 694 961 694" stroke="#999" stroke-width="3" fill="none"/>
<path d="M 601 794 C 676 794 886 694 961 694" stroke="#999" stroke-width="3" fill="none"/>
<path d="M 601 834 C 676 834 886 694 961 694" stroke="#999" stroke-width="3" fill="none"/>
<path d="M 601 874 C 676 874 886 694 961 694" stroke="#999" stroke-width="3" fill="none"/>
<path d="M 601 714 C 676 714 1126 714 1201 714" stroke="#999" stroke-width="3" fill="none"/>
<path d="M 601 754 C 676 754 1126 754 1201 754" stroke="#999" stroke-width="3" fill="none"/>
<path d="M 601 714 C 676 714 1366 794 1441 794" stroke="#999" stroke-width="3" fill="none"/>
<path d="M 601 754 C 676 754 1366 794 1441 794" stroke="#999" stroke-width="3" fill="none"/>
<path d="M 601 794 C 676 794 686 794 761 794" stroke="#999" stroke-width="3" fill="none"/>
<path d="M 881 794 C 941 794 901 794 961 794" stroke="#999" stroke-width="3" fill="none"/>
<path d="M 881 794 C 956 794 1126 794 1201 794" stroke="#999" stroke-width="3" fill="none"/>
<rect x="81" y="399" width="100" height="30" rx="5" fill="#E2C9E4" stroke="#999"/><rect x="176" y="409" width="10" height="10" rx="3" fill="#d9d9d9" stroke="#999"/>
<rect x="81" y="299" width="100" height="30" rx="5" fill="#ffffff" stroke="#bbb"/>
<rect x="241" y="399" width="100" height="30" rx="5" fill="#DEBD5C" stroke="#999"/><path d="M246 399 h25 v30 h-25 a5 5 0 0 1 -5 -5 v-20 a5 5 0 0 1 5 -5z" fill="#000" fill-opacity="0.05"/><path d="M271 399.5 V428.5" stroke="#000" stroke-opacity="0.1"/><g transform="translate(256,414)"><path d="M-8 -12 H3 L8 -7 V11.6 H-8 Z" fill="#fff"/><path d="M-1.5 -6.5 C-3.5 -6.5 -3.5 -5 -3.5 -3 V-1.5 C-3.5 -0.5 -4.5 0 -5.8 0 C-4.5 0 -3.5 0.5 -3.5 1.5 V3.5 C-3.5 5.5 -3 5.8 -1.5 5.8 M1.5 -6.5 C3.5 -6.5 3.5 -5 3.5 -3 V-1.5 C3.5 -0.5 4.5 0 5.8 0 C4.5 0 3.5 0.5 3.5 1.5 V3.5 C3.5 5.5 3 5.8 1.5 5.8" fill="none" stroke="#D2AE4A" stroke-width="1.5"/></g><text x="279" y="419" style="font-style:italic;">Json</text><rect x="236" y="409" width="10" height="10" rx="3" fill="#d9d9d9" stroke="#999"/><rect x="336" y="409" width="10" height="10" rx="3" fill="#d9d9d9" stroke="#999"/>
<rect x="361" y="339" width="140" height="30" rx="5" fill="#DBC5B5" stroke="#999"/><path d="M471 339 h25 a5 5 0 0 1 5 5 v20 a5 5 0 0 1 -5 5 h-25z" fill="#000" fill-opacity="0.05"/><path d="M471 339.5 V368.5" stroke="#000" stroke-opacity="0.1"/><g transform="translate(486,354)" fill="none" stroke="#fff" stroke-linejoin="round"><path d="M-2.6 -9.6 L6.8 -7.1 L8.5 1.7 L1 8.6 L-7.6 5.8 L-9.7 -3.4 Z" stroke-width="1.6"/><path d="M-2.6 -9.6 L0.6 -4.7 L6.8 -7.1 M0.6 -4.7 L-5.9 0.4 L-9.7 -3.4 M-5.9 0.4 L2.7 3 L0.6 -4.7 M2.7 3 L8.5 1.7 M2.7 3 L1 8.6 M-5.9 0.4 L-7.6 5.8" stroke-width="0.9"/></g><text x="463" y="359" text-anchor="end" style="font-style:italic;">temperatures</text><rect x="356" y="349" width="10" height="10" rx="3" fill="#d9d9d9" stroke="#999"/>
<rect x="861" y="239" width="140" height="30" rx="5" fill="#FDD0A2" stroke="#999"/><path d="M866 239 h25 v30 h-25 a5 5 0 0 1 -5 -5 v-20 a5 5 0 0 1 5 -5z" fill="#000" fill-opacity="0.05"/><path d="M891 239.5 V268.5" stroke="#000" stroke-opacity="0.1"/><g transform="translate(876,254)" fill="none" stroke="#fff" stroke-width="1.9" stroke-linecap="round"><path d="M6.9 -8.8 C6 -11.5 4.5 -11.8 3.4 -11.8 C1.5 -11.8 1 -9 0.9 -5 L-0.4 6 C-0.8 9.5 -1.5 10.8 -3 10.8 C-4.5 10.8 -5.3 9.5 -5.6 7.7"/><path d="M1.1 -6 L-0.5 6.5" stroke-width="2.5"/><path d="M-5 -0.4 H5.4" stroke-linecap="butt" stroke-width="1.6"/></g><text x="899" y="259" style="font-style:italic;">Calculation</text><rect x="856" y="249" width="10" height="10" rx="3" fill="#d9d9d9" stroke="#999"/><rect x="996" y="249" width="10" height="10" rx="3" fill="#d9d9d9" stroke="#999"/>
<rect x="1121" y="239" width="120" height="30" rx="5" fill="#FDD0A2" stroke="#999"/><path d="M1126 239 h25 v30 h-25 a5 5 0 0 1 -5 -5 v-20 a5 5 0 0 1 5 -5z" fill="#000" fill-opacity="0.05"/><path d="M1151 239.5 V268.5" stroke="#000" stroke-opacity="0.1"/><g transform="translate(1136,254)" fill="none" stroke="#fff" stroke-width="1.9" stroke-linecap="round"><path d="M6.9 -8.8 C6 -11.5 4.5 -11.8 3.4 -11.8 C1.5 -11.8 1 -9 0.9 -5 L-0.4 6 C-0.8 9.5 -1.5 10.8 -3 10.8 C-4.5 10.8 -5.3 9.5 -5.6 7.7"/><path d="M1.1 -6 L-0.5 6.5" stroke-width="2.5"/><path d="M-5 -0.4 H5.4" stroke-linecap="butt" stroke-width="1.6"/></g><text x="1159" y="259" style="font-style:italic;">Emailtext</text><rect x="1116" y="249" width="10" height="10" rx="3" fill="#d9d9d9" stroke="#999"/><rect x="1236" y="249" width="10" height="10" rx="3" fill="#d9d9d9" stroke="#999"/>
<rect x="1121" y="279" width="120" height="30" rx="5" fill="#FDD0A2" stroke="#999"/><path d="M1126 279 h25 v30 h-25 a5 5 0 0 1 -5 -5 v-20 a5 5 0 0 1 5 -5z" fill="#000" fill-opacity="0.05"/><path d="M1151 279.5 V308.5" stroke="#000" stroke-opacity="0.1"/><g transform="translate(1136,294)" fill="none" stroke="#fff" stroke-width="1.9" stroke-linecap="round"><path d="M6.9 -8.8 C6 -11.5 4.5 -11.8 3.4 -11.8 C1.5 -11.8 1 -9 0.9 -5 L-0.4 6 C-0.8 9.5 -1.5 10.8 -3 10.8 C-4.5 10.8 -5.3 9.5 -5.6 7.7"/><path d="M1.1 -6 L-0.5 6.5" stroke-width="2.5"/><path d="M-5 -0.4 H5.4" stroke-linecap="butt" stroke-width="1.6"/></g><text x="1159" y="299" style="font-style:italic;">Emailtext</text><rect x="1116" y="289" width="10" height="10" rx="3" fill="#d9d9d9" stroke="#999"/><rect x="1236" y="289" width="10" height="10" rx="3" fill="#d9d9d9" stroke="#999"/>
<rect x="801" y="359" width="140" height="30" rx="5" fill="#DDAA99" stroke="#999"/><path d="M911 359 h25 a5 5 0 0 1 5 5 v20 a5 5 0 0 1 -5 5 h-25z" fill="#000" fill-opacity="0.05"/><path d="M911 359.5 V388.5" stroke="#000" stroke-opacity="0.1"/><g transform="translate(918.9,365.25) scale(1)" fill="none" stroke="#fff" stroke-width="1.5"><rect x="0" y="0" width="14.2" height="17.5" rx="1.8"/><path d="M14.2 4H10A2 2 0 0 0 10 8H14.2M0 10H4A1.9 1.9 0 0 1 4 13.8H0"/><path d="M0 6H8M6 11.9H14.2" stroke-opacity="0.6"/></g><text x="903" y="379" text-anchor="end" style="">Save to SQL</text><rect x="796" y="369" width="10" height="10" rx="3" fill="#d9d9d9" stroke="#999"/>
<rect x="741" y="479" width="120" height="30" rx="5" fill="#FDD0A2" stroke="#999"/><path d="M746 479 h25 v30 h-25 a5 5 0 0 1 -5 -5 v-20 a5 5 0 0 1 5 -5z" fill="#000" fill-opacity="0.05"/><path d="M771 479.5 V508.5" stroke="#000" stroke-opacity="0.1"/><g transform="translate(756,494)" fill="none" stroke="#fff" stroke-width="1.9" stroke-linecap="round"><path d="M6.9 -8.8 C6 -11.5 4.5 -11.8 3.4 -11.8 C1.5 -11.8 1 -9 0.9 -5 L-0.4 6 C-0.8 9.5 -1.5 10.8 -3 10.8 C-4.5 10.8 -5.3 9.5 -5.6 7.7"/><path d="M1.1 -6 L-0.5 6.5" stroke-width="2.5"/><path d="M-5 -0.4 H5.4" stroke-linecap="butt" stroke-width="1.6"/></g><text x="779" y="499" style="font-style:italic;">set global</text><rect x="736" y="489" width="10" height="10" rx="3" fill="#d9d9d9" stroke="#999"/><rect x="856" y="489" width="10" height="10" rx="3" fill="#d9d9d9" stroke="#999"/>
<rect x="961" y="479" width="140" height="30" rx="5" fill="#77C6CC" stroke="#999"/><path d="M1071 479 h25 a5 5 0 0 1 5 5 v20 a5 5 0 0 1 -5 5 h-25z" fill="#000" fill-opacity="0.05"/><path d="M1071 479.5 V508.5" stroke="#000" stroke-opacity="0.1"/><g transform="translate(1086,494)"><path d="M-5.9 6.9 A8.3 8.3 0 1 1 5.9 6.9" fill="none" stroke="#fff" stroke-width="1.9"/><path d="M-0.9 7 L1.9 7.7 L3.7 -0.2 Z" fill="#fff"/></g><text x="1063" y="499" text-anchor="end" style="font-style:italic;">H_Temp_int</text><rect x="956" y="489" width="10" height="10" rx="3" fill="#d9d9d9" stroke="#999"/>
<rect x="961" y="519" width="140" height="30" rx="5" fill="#77C6CC" stroke="#999"/><path d="M1071 519 h25 a5 5 0 0 1 5 5 v20 a5 5 0 0 1 -5 5 h-25z" fill="#000" fill-opacity="0.05"/><path d="M1071 519.5 V548.5" stroke="#000" stroke-opacity="0.1"/><g transform="translate(1086,534)"><path d="M-5.9 6.9 A8.3 8.3 0 1 1 5.9 6.9" fill="none" stroke="#fff" stroke-width="1.9"/><path d="M-0.9 7 L1.9 7.7 L3.7 -0.2 Z" fill="#fff"/></g><text x="1063" y="539" text-anchor="end" style="font-style:italic;">H_Temp_ext</text><rect x="956" y="529" width="10" height="10" rx="3" fill="#d9d9d9" stroke="#999"/>
<rect x="961" y="559" width="160" height="30" rx="5" fill="#77C6CC" stroke="#999"/><path d="M1091 559 h25 a5 5 0 0 1 5 5 v20 a5 5 0 0 1 -5 5 h-25z" fill="#000" fill-opacity="0.05"/><path d="M1091 559.5 V588.5" stroke="#000" stroke-opacity="0.1"/><g transform="translate(1106,574)"><path d="M-5.9 6.9 A8.3 8.3 0 1 1 5.9 6.9" fill="none" stroke="#fff" stroke-width="1.9"/><path d="M-0.9 7 L1.9 7.7 L3.7 -0.2 Z" fill="#fff"/></g><text x="1083" y="579" text-anchor="end" style="font-style:italic;">H_Temp_Dev</text><rect x="956" y="569" width="10" height="10" rx="3" fill="#d9d9d9" stroke="#999"/>
<rect x="1201" y="399" width="180" height="30" rx="5" fill="#77C6CC" stroke="#999"/><path d="M1351 399 h25 a5 5 0 0 1 5 5 v20 a5 5 0 0 1 -5 5 h-25z" fill="#000" fill-opacity="0.05"/><path d="M1351 399.5 V428.5" stroke="#000" stroke-opacity="0.1"/><text x="1223" y="419" style="font-style:italic;">G_Temp_xx</text><rect x="1196" y="409" width="10" height="10" rx="3" fill="#d9d9d9" stroke="#999"/>
<rect x="1201" y="439" width="180" height="30" rx="5" fill="#77C6CC" stroke="#999"/><path d="M1351 439 h25 a5 5 0 0 1 5 5 v20 a5 5 0 0 1 -5 5 h-25z" fill="#000" fill-opacity="0.05"/><path d="M1351 439.5 V468.5" stroke="#000" stroke-opacity="0.1"/><text x="1223" y="459" style="font-style:italic;">G_Temp_xx</text><rect x="1196" y="449" width="10" height="10" rx="3" fill="#d9d9d9" stroke="#999"/>
<rect x="1201" y="479" width="180" height="30" rx="5" fill="#77C6CC" stroke="#999"/><path d="M1351 479 h25 a5 5 0 0 1 5 5 v20 a5 5 0 0 1 -5 5 h-25z" fill="#000" fill-opacity="0.05"/><path d="M1351 479.5 V508.5" stroke="#000" stroke-opacity="0.1"/><text x="1228" y="499" style="font-style:italic;">G_Temp_xx</text><rect x="1196" y="489" width="10" height="10" rx="3" fill="#d9d9d9" stroke="#999"/>
<rect x="1201" y="519" width="180" height="30" rx="5" fill="#77C6CC" stroke="#999"/><path d="M1351 519 h25 a5 5 0 0 1 5 5 v20 a5 5 0 0 1 -5 5 h-25z" fill="#000" fill-opacity="0.05"/><path d="M1351 519.5 V548.5" stroke="#000" stroke-opacity="0.1"/><text x="1224" y="539" style="font-style:italic;">G_Temp_xx</text><rect x="1196" y="529" width="10" height="10" rx="3" fill="#d9d9d9" stroke="#999"/>
<rect x="1201" y="639" width="180" height="30" rx="5" fill="#77C6CC" stroke="#999"/><path d="M1351 639 h25 a5 5 0 0 1 5 5 v20 a5 5 0 0 1 -5 5 h-25z" fill="#000" fill-opacity="0.05"/><path d="M1351 639.5 V668.5" stroke="#000" stroke-opacity="0.1"/><text x="1237" y="659" style="font-style:italic;">G_Temp_xx</text><rect x="1196" y="649" width="10" height="10" rx="3" fill="#d9d9d9" stroke="#999"/>
<rect x="321" y="639" width="120" height="30" rx="5" fill="#DBC5B5" stroke="#999"/><path d="M411 639 h25 a5 5 0 0 1 5 5 v20 a5 5 0 0 1 -5 5 h-25z" fill="#000" fill-opacity="0.05"/><path d="M411 639.5 V668.5" stroke="#000" stroke-opacity="0.1"/><g transform="translate(426,654)" fill="none" stroke="#fff" stroke-linejoin="round"><path d="M-2.6 -9.6 L6.8 -7.1 L8.5 1.7 L1 8.6 L-7.6 5.8 L-9.7 -3.4 Z" stroke-width="1.6"/><path d="M-2.6 -9.6 L0.6 -4.7 L6.8 -7.1 M0.6 -4.7 L-5.9 0.4 L-9.7 -3.4 M-5.9 0.4 L2.7 3 L0.6 -4.7 M2.7 3 L8.5 1.7 M2.7 3 L1 8.6 M-5.9 0.4 L-7.6 5.8" stroke-width="0.9"/></g><text x="403" y="659" text-anchor="end" style="font-style:italic;">humidity</text><rect x="316" y="649" width="10" height="10" rx="3" fill="#d9d9d9" stroke="#999"/>
<rect x="241" y="699" width="100" height="30" rx="5" fill="#DEBD5C" stroke="#999"/><path d="M246 699 h25 v30 h-25 a5 5 0 0 1 -5 -5 v-20 a5 5 0 0 1 5 -5z" fill="#000" fill-opacity="0.05"/><path d="M271 699.5 V728.5" stroke="#000" stroke-opacity="0.1"/><g transform="translate(256,714)"><path d="M-8 -12 H3 L8 -7 V11.6 H-8 Z" fill="#fff"/><path d="M-1.5 -6.5 C-3.5 -6.5 -3.5 -5 -3.5 -3 V-1.5 C-3.5 -0.5 -4.5 0 -5.8 0 C-4.5 0 -3.5 0.5 -3.5 1.5 V3.5 C-3.5 5.5 -3 5.8 -1.5 5.8 M1.5 -6.5 C3.5 -6.5 3.5 -5 3.5 -3 V-1.5 C3.5 -0.5 4.5 0 5.8 0 C4.5 0 3.5 0.5 3.5 1.5 V3.5 C3.5 5.5 3 5.8 1.5 5.8" fill="none" stroke="#D2AE4A" stroke-width="1.5"/></g><text x="279" y="719" style="font-style:italic;">Json</text><rect x="236" y="709" width="10" height="10" rx="3" fill="#d9d9d9" stroke="#999"/><rect x="336" y="709" width="10" height="10" rx="3" fill="#d9d9d9" stroke="#999"/>
<rect x="961" y="679" width="140" height="30" rx="5" fill="#DDAA99" stroke="#999"/><path d="M1071 679 h25 a5 5 0 0 1 5 5 v20 a5 5 0 0 1 -5 5 h-25z" fill="#000" fill-opacity="0.05"/><path d="M1071 679.5 V708.5" stroke="#000" stroke-opacity="0.1"/><g transform="translate(1078.9,685.25) scale(1)" fill="none" stroke="#fff" stroke-width="1.5"><rect x="0" y="0" width="14.2" height="17.5" rx="1.8"/><path d="M14.2 4H10A2 2 0 0 0 10 8H14.2M0 10H4A1.9 1.9 0 0 1 4 13.8H0"/><path d="M0 6H8M6 11.9H14.2" stroke-opacity="0.6"/></g><text x="1063" y="699" text-anchor="end" style="">Save to SQL</text><rect x="956" y="689" width="10" height="10" rx="3" fill="#d9d9d9" stroke="#999"/>
<rect x="761" y="779" width="120" height="30" rx="5" fill="#FDD0A2" stroke="#999"/><path d="M766 779 h25 v30 h-25 a5 5 0 0 1 -5 -5 v-20 a5 5 0 0 1 5 -5z" fill="#000" fill-opacity="0.05"/><path d="M791 779.5 V808.5" stroke="#000" stroke-opacity="0.1"/><g transform="translate(776,794)" fill="none" stroke="#fff" stroke-width="1.9" stroke-linecap="round"><path d="M6.9 -8.8 C6 -11.5 4.5 -11.8 3.4 -11.8 C1.5 -11.8 1 -9 0.9 -5 L-0.4 6 C-0.8 9.5 -1.5 10.8 -3 10.8 C-4.5 10.8 -5.3 9.5 -5.6 7.7"/><path d="M1.1 -6 L-0.5 6.5" stroke-width="2.5"/><path d="M-5 -0.4 H5.4" stroke-linecap="butt" stroke-width="1.6"/></g><text x="799" y="799" style="font-style:italic;">set global</text><rect x="756" y="789" width="10" height="10" rx="3" fill="#d9d9d9" stroke="#999"/><rect x="876" y="789" width="10" height="10" rx="3" fill="#d9d9d9" stroke="#999"/>
<rect x="961" y="779" width="140" height="30" rx="5" fill="#77C6CC" stroke="#999"/><path d="M1071 779 h25 a5 5 0 0 1 5 5 v20 a5 5 0 0 1 -5 5 h-25z" fill="#000" fill-opacity="0.05"/><path d="M1071 779.5 V808.5" stroke="#000" stroke-opacity="0.1"/><g transform="translate(1086,794)"><path d="M-5.9 6.9 A8.3 8.3 0 1 1 5.9 6.9" fill="none" stroke="#fff" stroke-width="1.9"/><path d="M-0.9 7 L1.9 7.7 L3.7 -0.2 Z" fill="#fff"/></g><text x="1063" y="799" text-anchor="end" style="font-style:italic;">H_Hum_int</text><rect x="956" y="789" width="10" height="10" rx="3" fill="#d9d9d9" stroke="#999"/>
<rect x="1201" y="699" width="180" height="30" rx="5" fill="#77C6CC" stroke="#999"/><path d="M1351 699 h25 a5 5 0 0 1 5 5 v20 a5 5 0 0 1 -5 5 h-25z" fill="#000" fill-opacity="0.05"/><path d="M1351 699.5 V728.5" stroke="#000" stroke-opacity="0.1"/><text x="1228" y="719" style="font-style:italic;">G_Hum_xx</text><rect x="1196" y="709" width="10" height="10" rx="3" fill="#d9d9d9" stroke="#999"/>
<rect x="1201" y="739" width="180" height="30" rx="5" fill="#77C6CC" stroke="#999"/><path d="M1351 739 h25 a5 5 0 0 1 5 5 v20 a5 5 0 0 1 -5 5 h-25z" fill="#000" fill-opacity="0.05"/><path d="M1351 739.5 V768.5" stroke="#000" stroke-opacity="0.1"/><text x="1228" y="759" style="font-style:italic;">G_Hum_xx</text><rect x="1196" y="749" width="10" height="10" rx="3" fill="#d9d9d9" stroke="#999"/>
<rect x="1201" y="779" width="180" height="30" rx="5" fill="#77C6CC" stroke="#999"/><path d="M1351 779 h25 a5 5 0 0 1 5 5 v20 a5 5 0 0 1 -5 5 h-25z" fill="#000" fill-opacity="0.05"/><path d="M1351 779.5 V808.5" stroke="#000" stroke-opacity="0.1"/><text x="1233" y="799" style="font-style:italic;">G_Hum_xx</text><rect x="1196" y="789" width="10" height="10" rx="3" fill="#d9d9d9" stroke="#999"/>
<rect x="501" y="399" width="100" height="30" rx="5" fill="#E2D96E" stroke="#999"/><path d="M506 399 h25 v30 h-25 a5 5 0 0 1 -5 -5 v-20 a5 5 0 0 1 5 -5z" fill="#000" fill-opacity="0.05"/><path d="M531 399.5 V428.5" stroke="#000" stroke-opacity="0.1"/><g transform="translate(515.5,414)" fill="none" stroke="#fff" stroke-width="2"><path d="M-7.5 7 H-3.5 L1.5 -7 H4.5" stroke-width="2.3"/><path d="M-7.5 -7 H-3.5 L-2.2 -3.8 M-0.5 1.5 L1 6.8 L1.5 7 H4.5"/><path d="M4.2 -11.5 L8 -7 L4.2 -2.5 Z M4.2 2.5 L8 7 L4.2 11.5 Z" fill="#fff" stroke="none"/></g><text x="539" y="419" style="font-style:italic;">t1</text><rect x="496" y="409" width="10" height="10" rx="3" fill="#d9d9d9" stroke="#999"/><rect x="596" y="409" width="10" height="10" rx="3" fill="#d9d9d9" stroke="#999"/>
<rect x="501" y="439" width="100" height="30" rx="5" fill="#E2D96E" stroke="#999"/><path d="M506 439 h25 v30 h-25 a5 5 0 0 1 -5 -5 v-20 a5 5 0 0 1 5 -5z" fill="#000" fill-opacity="0.05"/><path d="M531 439.5 V468.5" stroke="#000" stroke-opacity="0.1"/><g transform="translate(515.5,454)" fill="none" stroke="#fff" stroke-width="2"><path d="M-7.5 7 H-3.5 L1.5 -7 H4.5" stroke-width="2.3"/><path d="M-7.5 -7 H-3.5 L-2.2 -3.8 M-0.5 1.5 L1 6.8 L1.5 7 H4.5"/><path d="M4.2 -11.5 L8 -7 L4.2 -2.5 Z M4.2 2.5 L8 7 L4.2 11.5 Z" fill="#fff" stroke="none"/></g><text x="539" y="459" style="font-style:italic;">t2</text><rect x="496" y="449" width="10" height="10" rx="3" fill="#d9d9d9" stroke="#999"/><rect x="596" y="449" width="10" height="10" rx="3" fill="#d9d9d9" stroke="#999"/>
<rect x="501" y="479" width="100" height="30" rx="5" fill="#E2D96E" stroke="#999"/><path d="M506 479 h25 v30 h-25 a5 5 0 0 1 -5 -5 v-20 a5 5 0 0 1 5 -5z" fill="#000" fill-opacity="0.05"/><path d="M531 479.5 V508.5" stroke="#000" stroke-opacity="0.1"/><g transform="translate(515.5,494)" fill="none" stroke="#fff" stroke-width="2"><path d="M-7.5 7 H-3.5 L1.5 -7 H4.5" stroke-width="2.3"/><path d="M-7.5 -7 H-3.5 L-2.2 -3.8 M-0.5 1.5 L1 6.8 L1.5 7 H4.5"/><path d="M4.2 -11.5 L8 -7 L4.2 -2.5 Z M4.2 2.5 L8 7 L4.2 11.5 Z" fill="#fff" stroke="none"/></g><text x="539" y="499" style="font-style:italic;">ti</text><rect x="496" y="489" width="10" height="10" rx="3" fill="#d9d9d9" stroke="#999"/><rect x="596" y="489" width="10" height="10" rx="3" fill="#d9d9d9" stroke="#999"/>
<rect x="501" y="519" width="100" height="30" rx="5" fill="#E2D96E" stroke="#999"/><path d="M506 519 h25 v30 h-25 a5 5 0 0 1 -5 -5 v-20 a5 5 0 0 1 5 -5z" fill="#000" fill-opacity="0.05"/><path d="M531 519.5 V548.5" stroke="#000" stroke-opacity="0.1"/><g transform="translate(515.5,534)" fill="none" stroke="#fff" stroke-width="2"><path d="M-7.5 7 H-3.5 L1.5 -7 H4.5" stroke-width="2.3"/><path d="M-7.5 -7 H-3.5 L-2.2 -3.8 M-0.5 1.5 L1 6.8 L1.5 7 H4.5"/><path d="M4.2 -11.5 L8 -7 L4.2 -2.5 Z M4.2 2.5 L8 7 L4.2 11.5 Z" fill="#fff" stroke="none"/></g><text x="539" y="539" style="font-style:italic;">te</text><rect x="496" y="529" width="10" height="10" rx="3" fill="#d9d9d9" stroke="#999"/><rect x="596" y="529" width="10" height="10" rx="3" fill="#d9d9d9" stroke="#999"/>
<rect x="501" y="559" width="100" height="30" rx="5" fill="#E2D96E" stroke="#999"/><path d="M506 559 h25 v30 h-25 a5 5 0 0 1 -5 -5 v-20 a5 5 0 0 1 5 -5z" fill="#000" fill-opacity="0.05"/><path d="M531 559.5 V588.5" stroke="#000" stroke-opacity="0.1"/><g transform="translate(515.5,574)" fill="none" stroke="#fff" stroke-width="2"><path d="M-7.5 7 H-3.5 L1.5 -7 H4.5" stroke-width="2.3"/><path d="M-7.5 -7 H-3.5 L-2.2 -3.8 M-0.5 1.5 L1 6.8 L1.5 7 H4.5"/><path d="M4.2 -11.5 L8 -7 L4.2 -2.5 Z M4.2 2.5 L8 7 L4.2 11.5 Z" fill="#fff" stroke="none"/></g><text x="539" y="579" style="font-style:italic;">tde</text><rect x="496" y="569" width="10" height="10" rx="3" fill="#d9d9d9" stroke="#999"/><rect x="596" y="569" width="10" height="10" rx="3" fill="#d9d9d9" stroke="#999"/>
<rect x="501" y="599" width="100" height="30" rx="5" fill="#E2D96E" stroke="#999"/><path d="M506 599 h25 v30 h-25 a5 5 0 0 1 -5 -5 v-20 a5 5 0 0 1 5 -5z" fill="#000" fill-opacity="0.05"/><path d="M531 599.5 V628.5" stroke="#000" stroke-opacity="0.1"/><g transform="translate(515.5,614)" fill="none" stroke="#fff" stroke-width="2"><path d="M-7.5 7 H-3.5 L1.5 -7 H4.5" stroke-width="2.3"/><path d="M-7.5 -7 H-3.5 L-2.2 -3.8 M-0.5 1.5 L1 6.8 L1.5 7 H4.5"/><path d="M4.2 -11.5 L8 -7 L4.2 -2.5 Z M4.2 2.5 L8 7 L4.2 11.5 Z" fill="#fff" stroke="none"/></g><text x="539" y="619" style="font-style:italic;">tdi</text><rect x="496" y="609" width="10" height="10" rx="3" fill="#d9d9d9" stroke="#999"/><rect x="596" y="609" width="10" height="10" rx="3" fill="#d9d9d9" stroke="#999"/>
<rect x="501" y="639" width="100" height="30" rx="5" fill="#E2D96E" stroke="#999"/><path d="M506 639 h25 v30 h-25 a5 5 0 0 1 -5 -5 v-20 a5 5 0 0 1 5 -5z" fill="#000" fill-opacity="0.05"/><path d="M531 639.5 V668.5" stroke="#000" stroke-opacity="0.1"/><g transform="translate(515.5,654)" fill="none" stroke="#fff" stroke-width="2"><path d="M-7.5 7 H-3.5 L1.5 -7 H4.5" stroke-width="2.3"/><path d="M-7.5 -7 H-3.5 L-2.2 -3.8 M-0.5 1.5 L1 6.8 L1.5 7 H4.5"/><path d="M4.2 -11.5 L8 -7 L4.2 -2.5 Z M4.2 2.5 L8 7 L4.2 11.5 Z" fill="#fff" stroke="none"/></g><text x="539" y="659" style="font-style:italic;">tc</text><rect x="496" y="649" width="10" height="10" rx="3" fill="#d9d9d9" stroke="#999"/><rect x="596" y="649" width="10" height="10" rx="3" fill="#d9d9d9" stroke="#999"/>
<rect x="501" y="699" width="100" height="30" rx="5" fill="#E2D96E" stroke="#999"/><path d="M506 699 h25 v30 h-25 a5 5 0 0 1 -5 -5 v-20 a5 5 0 0 1 5 -5z" fill="#000" fill-opacity="0.05"/><path d="M531 699.5 V728.5" stroke="#000" stroke-opacity="0.1"/><g transform="translate(515.5,714)" fill="none" stroke="#fff" stroke-width="2"><path d="M-7.5 7 H-3.5 L1.5 -7 H4.5" stroke-width="2.3"/><path d="M-7.5 -7 H-3.5 L-2.2 -3.8 M-0.5 1.5 L1 6.8 L1.5 7 H4.5"/><path d="M4.2 -11.5 L8 -7 L4.2 -2.5 Z M4.2 2.5 L8 7 L4.2 11.5 Z" fill="#fff" stroke="none"/></g><text x="539" y="719" style="font-style:italic;">h1</text><rect x="496" y="709" width="10" height="10" rx="3" fill="#d9d9d9" stroke="#999"/><rect x="596" y="709" width="10" height="10" rx="3" fill="#d9d9d9" stroke="#999"/>
<rect x="501" y="739" width="100" height="30" rx="5" fill="#E2D96E" stroke="#999"/><path d="M506 739 h25 v30 h-25 a5 5 0 0 1 -5 -5 v-20 a5 5 0 0 1 5 -5z" fill="#000" fill-opacity="0.05"/><path d="M531 739.5 V768.5" stroke="#000" stroke-opacity="0.1"/><g transform="translate(515.5,754)" fill="none" stroke="#fff" stroke-width="2"><path d="M-7.5 7 H-3.5 L1.5 -7 H4.5" stroke-width="2.3"/><path d="M-7.5 -7 H-3.5 L-2.2 -3.8 M-0.5 1.5 L1 6.8 L1.5 7 H4.5"/><path d="M4.2 -11.5 L8 -7 L4.2 -2.5 Z M4.2 2.5 L8 7 L4.2 11.5 Z" fill="#fff" stroke="none"/></g><text x="539" y="759" style="font-style:italic;">h2</text><rect x="496" y="749" width="10" height="10" rx="3" fill="#d9d9d9" stroke="#999"/><rect x="596" y="749" width="10" height="10" rx="3" fill="#d9d9d9" stroke="#999"/>
<rect x="501" y="779" width="100" height="30" rx="5" fill="#E2D96E" stroke="#999"/><path d="M506 779 h25 v30 h-25 a5 5 0 0 1 -5 -5 v-20 a5 5 0 0 1 5 -5z" fill="#000" fill-opacity="0.05"/><path d="M531 779.5 V808.5" stroke="#000" stroke-opacity="0.1"/><g transform="translate(515.5,794)" fill="none" stroke="#fff" stroke-width="2"><path d="M-7.5 7 H-3.5 L1.5 -7 H4.5" stroke-width="2.3"/><path d="M-7.5 -7 H-3.5 L-2.2 -3.8 M-0.5 1.5 L1 6.8 L1.5 7 H4.5"/><path d="M4.2 -11.5 L8 -7 L4.2 -2.5 Z M4.2 2.5 L8 7 L4.2 11.5 Z" fill="#fff" stroke="none"/></g><text x="539" y="799" style="font-style:italic;">hi</text><rect x="496" y="789" width="10" height="10" rx="3" fill="#d9d9d9" stroke="#999"/><rect x="596" y="789" width="10" height="10" rx="3" fill="#d9d9d9" stroke="#999"/>
<rect x="501" y="819" width="100" height="30" rx="5" fill="#E2D96E" stroke="#999"/><path d="M506 819 h25 v30 h-25 a5 5 0 0 1 -5 -5 v-20 a5 5 0 0 1 5 -5z" fill="#000" fill-opacity="0.05"/><path d="M531 819.5 V848.5" stroke="#000" stroke-opacity="0.1"/><g transform="translate(515.5,834)" fill="none" stroke="#fff" stroke-width="2"><path d="M-7.5 7 H-3.5 L1.5 -7 H4.5" stroke-width="2.3"/><path d="M-7.5 -7 H-3.5 L-2.2 -3.8 M-0.5 1.5 L1 6.8 L1.5 7 H4.5"/><path d="M4.2 -11.5 L8 -7 L4.2 -2.5 Z M4.2 2.5 L8 7 L4.2 11.5 Z" fill="#fff" stroke="none"/></g><text x="539" y="839" style="font-style:italic;">he</text><rect x="496" y="829" width="10" height="10" rx="3" fill="#d9d9d9" stroke="#999"/><rect x="596" y="829" width="10" height="10" rx="3" fill="#d9d9d9" stroke="#999"/>
<rect x="501" y="859" width="100" height="30" rx="5" fill="#E2D96E" stroke="#999"/><path d="M506 859 h25 v30 h-25 a5 5 0 0 1 -5 -5 v-20 a5 5 0 0 1 5 -5z" fill="#000" fill-opacity="0.05"/><path d="M531 859.5 V888.5" stroke="#000" stroke-opacity="0.1"/><g transform="translate(515.5,874)" fill="none" stroke="#fff" stroke-width="2"><path d="M-7.5 7 H-3.5 L1.5 -7 H4.5" stroke-width="2.3"/><path d="M-7.5 -7 H-3.5 L-2.2 -3.8 M-0.5 1.5 L1 6.8 L1.5 7 H4.5"/><path d="M4.2 -11.5 L8 -7 L4.2 -2.5 Z M4.2 2.5 L8 7 L4.2 11.5 Z" fill="#fff" stroke="none"/></g><text x="539" y="879" style="font-style:italic;">hde</text><rect x="496" y="869" width="10" height="10" rx="3" fill="#d9d9d9" stroke="#999"/><rect x="596" y="869" width="10" height="10" rx="3" fill="#d9d9d9" stroke="#999"/>
<rect x="501" y="899" width="100" height="30" rx="5" fill="#E2D96E" stroke="#999"/><path d="M506 899 h25 v30 h-25 a5 5 0 0 1 -5 -5 v-20 a5 5 0 0 1 5 -5z" fill="#000" fill-opacity="0.05"/><path d="M531 899.5 V928.5" stroke="#000" stroke-opacity="0.1"/><g transform="translate(515.5,914)" fill="none" stroke="#fff" stroke-width="2"><path d="M-7.5 7 H-3.5 L1.5 -7 H4.5" stroke-width="2.3"/><path d="M-7.5 -7 H-3.5 L-2.2 -3.8 M-0.5 1.5 L1 6.8 L1.5 7 H4.5"/><path d="M4.2 -11.5 L8 -7 L4.2 -2.5 Z M4.2 2.5 L8 7 L4.2 11.5 Z" fill="#fff" stroke="none"/></g><text x="539" y="919" style="font-style:italic;">hdi</text><rect x="496" y="909" width="10" height="10" rx="3" fill="#d9d9d9" stroke="#999"/><rect x="596" y="909" width="10" height="10" rx="3" fill="#d9d9d9" stroke="#999"/>
<rect x="501" y="939" width="100" height="30" rx="5" fill="#E2D96E" stroke="#999"/><path d="M506 939 h25 v30 h-25 a5 5 0 0 1 -5 -5 v-20 a5 5 0 0 1 5 -5z" fill="#000" fill-opacity="0.05"/><path d="M531 939.5 V968.5" stroke="#000" stroke-opacity="0.1"/><g transform="translate(515.5,954)" fill="none" stroke="#fff" stroke-width="2"><path d="M-7.5 7 H-3.5 L1.5 -7 H4.5" stroke-width="2.3"/><path d="M-7.5 -7 H-3.5 L-2.2 -3.8 M-0.5 1.5 L1 6.8 L1.5 7 H4.5"/><path d="M4.2 -11.5 L8 -7 L4.2 -2.5 Z M4.2 2.5 L8 7 L4.2 11.5 Z" fill="#fff" stroke="none"/></g><text x="539" y="959" style="font-style:italic;">hc</text><rect x="496" y="949" width="10" height="10" rx="3" fill="#d9d9d9" stroke="#999"/><rect x="596" y="949" width="10" height="10" rx="3" fill="#d9d9d9" stroke="#999"/>
</svg>
<div class="a" style="left:176px;top:812px;width:1097px;height:16px;background:#f1f1f1"></div>
<div class="a" style="left:237px;top:814px;width:226px;height:13px;background:#c1c1c1"></div>
<svg class="a" style="left:180px;top:816px" width="6" height="9"><path d="M5.5 0.5V8.5L0.5 4.5Z" fill="#505050"/></svg>
<svg class="a" style="left:1247px;top:816px" width="6" height="9"><path d="M0.5 0.5V8.5L5.5 4.5Z" fill="#505050"/></svg>
<div class="a" style="left:1256px;top:812px;width:17px;height:16px;background:#dcdcdc"></div>
<div class="a" style="left:1256px;top:213px;width:17px;height:599px;background:#f1f1f1"></div>
<div class="a" style="left:1258px;top:467px;width:13px;height:67px;background:#c1c1c1"></div>
<svg class="a" style="left:1260px;top:220px" width="9" height="6"><path d="M0.5 5.5H8.5L4.5 0.5Z" fill="#505050"/></svg>
<svg class="a" style="left:1260px;top:800px" width="9" height="6"><path d="M0.5 0.5H8.5L4.5 5.5Z" fill="#505050"/></svg>
<div class="a" style="left:1273px;top:138px;width:9px;height:690px;background:#f3f3f3;border-left:1px solid #bbb;border-right:1px solid #bbb"></div>
<div class="a" style="left:1276px;top:469px;width:2px;height:50px;background:#ccc"></div>
<div class="a" style="left:1282px;top:138px;width:220px;height:36px;background:#fff;border-bottom:1px solid #bbb"></div>
<div class="a" style="left:1285px;top:142px;width:99px;height:32px;background:#fff;border:1px solid #bbb;border-bottom:none"></div>
<svg class="a" style="left:1297px;top:151px" width="7" height="11"><rect x="2" y="0" width="3" height="2.5" fill="#777"/><path d="M0.5 3.5H4.8V9H6.5V11H0.5V9H2.2V5.5H0.5Z" fill="#777"/></svg>
<div class="a" style="left:1315px;top:149px;font-size:14px;line-height:17px;color:#333;font-weight:bold">info</div>
<div class="a" style="left:1394px;top:143px;width:28px;height:28px;background:#fff;border:1px solid #bbb"></div>
<div class="a" style="left:1428px;top:143px;width:28px;height:28px;background:#fff;border:1px solid #bbb"></div>
<div class="a" style="left:1462px;top:143px;width:28px;height:28px;background:#fff;border:1px solid #bbb"></div>
<div class="a" style="left:1496px;top:143px;width:28px;height:28px;background:#fff;border:1px solid #bbb"></div>
<div class="a" style="left:1394px;top:143px;width:28px;height:28px;background:#eee;border:1px solid #bbb;border-bottom:2px solid #999"></div>
<svg class="a" style="left:1405px;top:151px" width="7" height="11"><rect x="2" y="0" width="3" height="2.5" fill="#555"/><path d="M0.5 3.5H4.8V9H6.5V11H0.5V9H2.2V5.5H0.5Z" fill="#555"/></svg>
<svg class="a" style="left:1435px;top:149px" width="15" height="14"><path d="M3 1H14L12 11H1Z" fill="#666"/><path d="M1 11H12L11 13H1Z" fill="none" stroke="#666"/><path d="M5 3.5H12M4.5 6H11.5" stroke="#fff" stroke-width="0.8"/></svg>
<svg class="a" style="left:1469px;top:148px" width="14" height="16"><ellipse cx="7" cy="9" rx="4" ry="5" fill="#666"/><circle cx="7" cy="3.5" r="2.2" fill="#666"/><path d="M0.5 5L3 7M13.5 5L11 7M0 9.5H3M14 9.5H11M0.5 14L3 12M13.5 14L11 12" stroke="#666" stroke-width="1.3"/><path d="M7 5V14" stroke="#fff" stroke-width="0.7"/></svg>
<div class="a" style="left:1282px;top:174px;width:220px;height:39px;background:#f3f3f3;border-bottom:1px solid #ddd"></div>
<div class="a" style="left:1404px;top:180px;width:110px;height:26px;background:#fff;border:1px solid #ddd;border-radius:4px"></div>
<svg class="a" style="left:1411px;top:187px" width="11" height="11"><circle cx="4.6" cy="4.6" r="3.3" fill="none" stroke="#777" stroke-width="1.6"/><path d="M7 7L10 10" stroke="#777" stroke-width="2"/></svg>
<div class="a" style="left:1427px;top:186px;font-size:12px;line-height:14px;color:#999;white-space:nowrap">Flows durchsuchen</div>
<div class="a" style="left:1282px;top:213px;width:220px;height:259px;background:#f3f3f3"></div>
<div class="a" style="left:1282px;top:213px;width:220px;height:124px;background:#fff"></div>
<svg class="a" style="left:1288px;top:221px" width="10" height="7"><path d="M1 1L5 5L9 1" fill="none" stroke="#666" stroke-width="1.2"/></svg>
<div class="tr" style="left:1306px;top:216px">Flows</div>
<svg class="a" style="left:1312px;top:244px" width="7" height="10"><path d="M1 1L5 5L1 9" fill="none" stroke="#666" stroke-width="1.2"/></svg>
<svg class="a" style="left:1312px;top:270px" width="7" height="10"><path d="M1 1L5 5L1 9" fill="none" stroke="#666" stroke-width="1.2"/></svg>
<svg class="a" style="left:1326px;top:240px" width="17" height="19"><g transform="translate(1.3,1.3) scale(0.96)" fill="none" stroke="#777" stroke-width="1.40625"><rect x="0" y="0" width="14.2" height="17.5" rx="1.8"/><path d="M14.2 4H10A2 2 0 0 0 10 8H14.2M0 10H4A1.9 1.9 0 0 1 4 13.8H0"/><path d="M0 6H8M6 11.9H14.2" stroke-opacity="0.6"/></g></svg>
<svg class="a" style="left:1326px;top:266px" width="17" height="19"><g transform="translate(1.3,1.3) scale(0.96)" fill="none" stroke="#777" stroke-width="1.40625"><rect x="0" y="0" width="14.2" height="17.5" rx="1.8"/><path d="M14.2 4H10A2 2 0 0 0 10 8H14.2M0 10H4A1.9 1.9 0 0 1 4 13.8H0"/><path d="M0 6H8M6 11.9H14.2" stroke-opacity="0.6"/></g></svg>
<div class="tr" style="left:1348px;top:241px">Recovered Nodes</div>
<div class="tr" style="left:1348px;top:267px">OpenAger</div>
<svg class="a" style="left:1289px;top:295px" width="7" height="10"><path d="M1 1L5 5L1 9" fill="none" stroke="#666" stroke-width="1.2"/></svg>
<div class="tr" style="left:1306px;top:292px">Subflow</div>
<svg class="a" style="left:1289px;top:319px" width="7" height="10"><path d="M1 1L5 5L1 9" fill="none" stroke="#666" stroke-width="1.2"/></svg>
<div class="tr" style="left:1306px;top:316px">Global Configuration Nodes</div>
<div class="a" style="left:1282px;top:472px;width:220px;height:6px;background:#f3f3f3;border-top:1px solid #ddd;border-bottom:1px solid #ddd"></div>
<div class="a" style="left:1437px;top:473px;width:3px;height:4px;background:#ccc"></div>
<div class="a" style="left:1282px;top:478px;width:220px;height:47px;background:#f3f3f3;border-bottom:1px solid #ddd"></div>
<div class="a" style="left:1296px;top:488px;width:32px;height:27px;background:#D6D06A;border:1px solid #B5AB3C;border-radius:4px"></div>
<svg class="a" style="left:1296px;top:488px" width="32" height="27"><path d="M10 13.5H14.5C16 13.5 16.5 7.5 19 7.5H21M14.5 13.5C16 13.5 16.5 19.5 19 19.5H21" fill="none" stroke="#fff" stroke-width="2.2"/><path d="M20.3 3.3L23.3 7.5L20.3 11.7ZM20.3 15.3L23.3 19.5L20.3 23.7Z" fill="#fff"/></svg>
<div class="a" style="left:1334px;top:493px;font-size:14px;line-height:17px;color:#333;font-weight:bold">Topic Switch</div>
<div class="a" style="left:1282px;top:525px;width:220px;height:303px;background:#fff"></div>
<div class="a" style="left:1282px;top:525px;width:100px;height:57px;background:#f3f3f3"></div>
<div class="a" style="left:1381px;top:525px;width:1px;height:58px;background:#ddd"></div>
<div class="a" style="left:1282px;top:524px;width:220px;height:2px;background:#ddd"></div>
<div class="a" style="left:1282px;top:556px;width:220px;height:1px;background:#ddd"></div>
<div class="a" style="left:1282px;top:583px;width:220px;height:1px;background:#ddd"></div>
<div class="tr" style="left:1288px;top:532px;font-size:14px">Node</div>
<div class="tr" style="left:1288px;top:562px;font-size:14px">Typ</div>
<div class="tr" style="left:1389px;top:534px;font-size:14px;color:#AD1625;white-space:nowrap">"6811f7d4.2c07c8"</div>
<div class="tr" style="left:1388px;top:562px;font-size:14px">switch</div>
<div class="a" style="left:1477px;top:591px;font-size:11px;line-height:13px;color:#555">Weitere</div>
<div class="a" style="left:1282px;top:662px;width:220px;height:17px;background:linear-gradient(rgba(243,243,243,0),#f6f6f6)"></div>
<div class="a" style="left:1282px;top:679px;width:220px;height:1px;background:#ddd"></div>
<div class="a" style="left:0;top:829px;width:1502px;height:11px;background:#f3f3f3"></div>
<div class="a" style="left:0;top:828px;width:1273px;height:1px;background:#bbb"></div>
<div class="a" style="left:1282px;top:828px;width:220px;height:1px;background:#bbb"></div>
<div class="a" style="left:175px;top:828px;width:1px;height:12px;background:#bbb"></div>
<div class="a" style="left:1273px;top:828px;width:1px;height:12px;background:#bbb"></div>
<div class="a" style="left:1281px;top:828px;width:1px;height:12px;background:#bbb"></div>
<div class="a" style="left:131px;top:832px;width:38px;height:10px;background:#fff;border:1px solid #ccc"></div>
<div class="a" style="left:149px;top:832px;width:1px;height:10px;background:#ccc"></div>
<svg class="a" style="left:136px;top:836px" width="30" height="4"><path d="M4.5 0L2 4M4.5 0L7 4" stroke="#777" stroke-width="1.3" fill="none"/><path d="M20 0.5L23 4M26 0.5L23 4" stroke="#777" stroke-width="1.3" fill="none"/></svg>
<div class="a" style="left:1183px;top:832px;width:19px;height:10px;background:#fff;border:1px solid #ccc"></div>
<svg class="a" style="left:1186px;top:836px" width="14" height="4"><path d="M1 4V1.5C3 0.5 5 0.5 7 1.5C9 0.5 11 0.5 13 1.5V4M5 1V4M9 1V4" stroke="#888" stroke-width="1" fill="none"/></svg>
<div class="a" style="left:1206px;top:832px;width:57px;height:10px;background:#fff;border:1px solid #ccc"></div>
<div class="a" style="left:1224px;top:832px;width:1px;height:10px;background:#ccc"></div>
<div class="a" style="left:1243px;top:832px;width:1px;height:10px;background:#ccc"></div>
<svg class="a" style="left:1228px;top:836px" width="34" height="4"><path d="M2 4C2 1 8 1 8 4" stroke="#777" stroke-width="1.3" fill="none"/><path d="M25 0V4" stroke="#777" stroke-width="1.8"/></svg>
</body></html>
